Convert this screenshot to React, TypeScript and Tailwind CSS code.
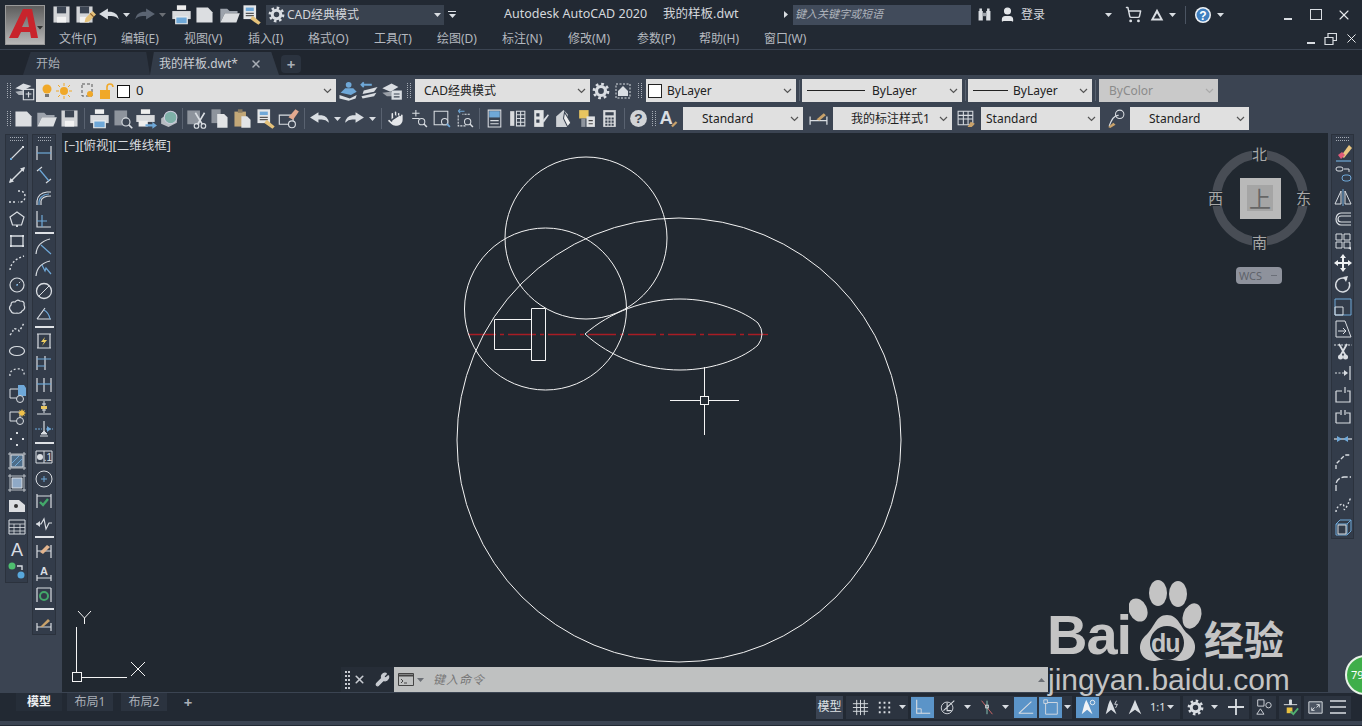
import type { ReactNode } from "react";
import { Wrench, X, User, ShoppingCart, Hand } from "lucide-react";

const L = "#d9dde2";
const B = "#6fa8d8";
const DOT = "2 2";

const line = (d: string, c = L, w = 1.2, dash?: string) => (
  <path d={d} fill="none" stroke={c} strokeWidth={w} strokeDasharray={dash} />
);
const floppy = (
  <>
    <path d="M3 3h14v14H3z" fill="#d2d4d7" />
    <path d="M6 3h8v6H6z" fill="#3b4452" />
    <path d="M6 12h8v5H6z" fill="#f2f2f2" />
  </>
);
const pencil = (
  <>
    <path d="M10 17l1-4 6-6 3 3-6 6z" fill="#e5c27a" />
    <path d="M15 9l3 3" stroke="#8a5a2a" strokeWidth={1} />
  </>
);
const dimSides = line("M3 4v13M17 4v13M3 10h14");

const icons: Record<string, ReactNode> = {
  save: floppy,
  saveas: (
    <>
      {floppy}
      {pencil}
    </>
  ),
  gear: (
    <>
      <circle cx="10" cy="10" r="7.800" fill="none" stroke={L} strokeWidth={3} strokeDasharray="3 3.120" />
      <circle cx="10" cy="10" r="5" fill="none" stroke={L} strokeWidth={3.600} />
    </>
  ),
  undo: <path d="M1 9l8-5v3h3q6 1 7 7q-3-3-7-3H9v3z" fill={L} />,
  redo: <path d="M19 9l-8-5v3H8q-6 1-7 7q3-3 7-3h3v3z" fill={L} />,
  redoOff: <path d="M19 9l-8-5v3H8q-6 1-7 7q3-3 7-3h3v3z" fill="#5b6472" />,
  print: (
    <>
      <path d="M6 2h8v4H6z" fill="#eee" />
      <path d="M2 7h16v7H2z" fill="#d8dadd" />
      <path d="M5 12h10v6H5z" fill={B} stroke="#eee" />
    </>
  ),
  newf: <path d="M3 4h10l4 4v9H3z" fill="#dcdee1" />,
  open: (
    <>
      <path d="M2 5h6l2 2h7v2H6l-4 8z" fill="#9da3ac" />
      <path d="M6 9h13l-3 8H2z" fill="#dcdee1" />
    </>
  ),
  cadstd: (
    <>
      <path d="M3 2h11v12H3z" fill="#e4e6e8" />
      <path d="M5 4h7v3H5z" fill={B} />
      <path d="M5 9h7M5 11h7" stroke="#555" />
      <path d="M9 14l2-3 7 6-2 2z" fill="#e5c27a" />
    </>
  ),
  layerprops: (
    <>
      <path d="M2 8l7-4 7 2-7 4z" fill="#d9dde2" />
      <path d="M2 11l7-1 2 1v3H5z" fill="#aeb3ba" />
      <path d="M9 9h9v9H9z" fill="#3b4452" stroke={L} />
      <path d="M11 13h5M13.500 11v5" stroke={L} />
    </>
  ),
  layers1: (
    <>
      <circle cx="11" cy="5" r="2.500" fill={B} />
      <path d="M8 8h7l3 3-5 3-9-2z" fill={B} />
      <path d="M3 14l9 3 6-3-1 3-6 2-8-2z" fill={L} />
    </>
  ),
  layers2: (
    <>
      <path d="M3 5h9M5 3L3 5l2 2" stroke={B} strokeWidth={1.6} fill="none" />
      <path d="M5 10l12-3-3 4-10 2z" fill={L} />
      <path d="M3 15l13-3-2 3-10 2z" fill={L} />
    </>
  ),
  layers3: (
    <>
      <path d="M2 8l8-4 6 3-7 4z" fill={L} />
      <path d="M2 12l7-1 3 1v3H6z" fill="#9aa0a8" />
      <path d="M10 10h9v8h-9z" fill="#d9dde2" />
      <path d="M12 13h5M12 15.500h5" stroke="#3b4452" />
    </>
  ),
  gear2: (
    <>
      <path d="M3 3h14v14H3z" fill="none" stroke={L} strokeDasharray="2 1.500" />
      <path d="M5 10l5-5 5 5v5H5z" fill={L} />
    </>
  ),
  preview: (
    <>
      <path d="M3 3h11v13H3z" fill="#8e949d" />
      <circle cx="13" cy="13" r="3.500" fill="#3b4452" stroke={L} />
      <path d="M15.500 15.500l3 3" stroke={L} strokeWidth={1.4} />
    </>
  ),
  publish: (
    <>
      <path d="M6 2h8v4H6z" fill="#eee" />
      <path d="M2 7h16v6H2z" fill="#d8dadd" />
      <path d="M4 12h8v5H4z" fill="#eee" />
      <path d="M10 15h6v-2l4 3-4 3v-2h-6z" fill={B} />
    </>
  ),
  plot3d: (
    <>
      <path d="M3 10l8-6 7 3v7l-8 4-7-3z" fill="#b8bcc2" />
      <circle cx="12" cy="9" r="6" fill="#7eb0a8" stroke="#ccd" />
    </>
  ),
  cut: (
    <>
      <path d="M2 3h11v12H2z" fill="#8e949d" />
      <path d="M9 5l6 10M17 5l-6 10" stroke={L} strokeWidth={1.4} />
      <circle cx="10" cy="16.500" r="2" fill="none" stroke={L} />
      <circle cx="16" cy="16.500" r="2" fill="none" stroke={L} />
    </>
  ),
  copy: (
    <>
      <path d="M3 2h8v12H3z" fill="#8e949d" />
      <path d="M8 6h6l3 3v9H8z" fill="#e2e4e6" />
    </>
  ),
  paste: (
    <>
      <path d="M3 4h10v13H3z" fill="#c3a878" />
      <path d="M6 2h4v3H6z" fill="#8a7b60" />
      <path d="M9 8h5l3 3v7H9z" fill="#e2e4e6" />
    </>
  ),
  match: (
    <>
      <path d="M2 7h12v8H2z" fill="none" stroke={L} />
      <circle cx="13" cy="15" r="3" fill="#3b4452" stroke={L} />
      <path d="M10 9l6-7 3 2-5 7z" fill="#e3a98f" />
    </>
  ),
  zoomrt: (
    <>
      <path d="M4 5h7M7.500 2v6M4 10h7" stroke={L} />
      <circle cx="13" cy="13" r="3" fill="none" stroke={L} />
      <path d="M15 15l3 3" stroke={L} strokeWidth={1.4} />
    </>
  ),
  zoomwin: (
    <>
      <path d="M3 3h13v13H3z" fill="none" stroke={L} />
      <circle cx="13" cy="13" r="3" fill="#3b4452" stroke={L} />
      <path d="M15 15l3 3" stroke={B} strokeWidth={1.6} />
    </>
  ),
  zoomprev: (
    <>
      <path d="M4 3h6M4 3l2-2M4 3l2 2" stroke={B} fill="none" />
      <path d="M4 7v10h8M15 6H8" stroke={L} fill="none" strokeDasharray="2 1" />
      <circle cx="13" cy="13" r="3" fill="none" stroke={L} />
      <path d="M15 15l3 3" stroke={L} strokeWidth={1.4} />
    </>
  ),
  props: (
    <>
      <path d="M4 2h12v16H4z" fill="none" stroke={L} />
      <path d="M5 3h10v6H5z" fill={B} />
      <path d="M6 12h8M6 15h8" stroke={L} />
    </>
  ),
  dc: (
    <>
      <path d="M3 3h4v14H3z" fill="#d8dadd" />
      <path d="M9 3h8v14H9z" fill="none" stroke={L} />
      <path d="M9 6.500h8M9 10h8M9 13.500h8M13 3v14" stroke={L} />
    </>
  ),
  tools: (
    <>
      <path d="M4 2h9v16H4z" fill="#e0e2e4" />
      <path d="M6 5h3v3H6zM6 11h3v3H6z" fill="#3b4452" />
      <path d="M12 12l5-6 1 1-5 7z" fill={L} />
    </>
  ),
  sheet: (
    <>
      <path d="M3 8l7-6 4 4v12H3z" fill="#cfd2d6" />
      <path d="M11 4l6 10-3 4-4-8z" fill="#eee" stroke="#3b4452" />
    </>
  ),
  markup: (
    <>
      <path d="M3 2h9v8H3z" fill="#e8c560" />
      <path d="M10 8h8v10h-8z" fill="#e0e2e4" />
      <path d="M12 12h4M12 15h4" stroke="#444" />
      <path d="M5 10h4v8H5z" fill="#8e949d" />
    </>
  ),
  calc: (
    <>
      <path d="M4 2h12v16H4z" fill="#d8dadd" />
      <path d="M6 4h8v3H6z" fill="#3b4452" />
      <path d="M6 9h2v2H6zM9 9h2v2H9zM12 9h2v2h-2zM6 12h2v2H6zM9 12h2v2H9zM12 12h2v2h-2zM6 15h2v2H6zM9 15h2v2H9zM12 15h2v2h-2z" fill="#3b4452" />
    </>
  ),
  help: (
    <>
      <circle cx="10" cy="10" r="8" fill="#d2d4d7" />
      <text x="10" y="14.500" textAnchor="middle" fontSize="13" fontWeight="700" fill="#3b4452" fontFamily="Liberation Sans">?</text>
    </>
  ),
  helpB: (
    <>
      <circle cx="10" cy="10" r="8" fill="#f0f2f5" />
      <circle cx="10" cy="10" r="6.500" fill="#3f7fc0" />
      <text x="10" y="14.500" textAnchor="middle" fontSize="12" fontWeight="700" fill="#fff" fontFamily="Liberation Sans">?</text>
    </>
  ),
  textA: (
    <>
      <text x="8" y="15" textAnchor="middle" fontSize="16" fontWeight="700" fill={L} fontFamily="Liberation Sans">A</text>
      <path d="M13 17l4-4" stroke="#c9a26a" strokeWidth={2} />
    </>
  ),
  dimstyle: (
    <>
      {line("M2 8v8M18 8v8M2 12h16")}
      <path d="M8 11l7-6 2 2-6 5z" fill="#c9a26a" />
    </>
  ),
  tablestyle: (
    <>
      <path d="M2 3h14v13H2z" fill="none" stroke={L} />
      <path d="M2 7h14M2 10.500h14M7 3v13M11.500 3v13" stroke={L} />
      <path d="M11 18l3-5 4 2-3 3z" fill="#c9a26a" />
    </>
  ),
  mleader: (
    <>
      {line("M4 17Q8 6 13 7", L)}
      <circle cx="14" cy="6" r="4" fill="none" stroke={L} />
      <path d="M3 18l5-4 2 2-5 3z" fill="#c9a26a" />
    </>
  ),
  binoc: (
    <>
      <path d="M3 6h5v11H3zM12 6h5v11h-5z" fill={L} />
      <path d="M8 8h4v4H8z" fill="#9aa0a8" />
      <path d="M4 3h3v3H4zM13 3h3v3h-3z" fill={L} />
    </>
  ),
  triangle: <path d="M10 3L3 16h14zM10 8l3.500 6h-7z" fill={L} fillRule="evenodd" />,
  // left bar: draw
  ln: (
    <>
      {line("M4 16L16 4", L, 1.1)}
      <rect x="3" y="15" width="2" height="2" fill={B} />
      <rect x="15" y="3" width="2" height="2" fill={L} />
    </>
  ),
  xln: (
    <>
      <path d="M3 17l7-7 7-7" stroke={L} strokeWidth={1.4} />
      <path d="M2 18l1.500-5 3.500 3.500zM18 2l-1.500 5L13 3.500z" fill={L} />
    </>
  ),
  pl: line("M2 15h8M11 4h3q4 1 4 5.500T14 15h-3", L, 1.4, DOT),
  pg: (
    <>
      <path d="M10 3l7 5-2.500 8h-9L3 8z" fill="none" stroke={L} strokeWidth={1.2} />
      <rect x="9" y="16" width="2" height="2" fill={L} />
    </>
  ),
  rc: (
    <>
      <path d="M4 5h12v10H4z" fill="none" stroke={L} strokeWidth={1.3} />
      <path d="M3 4h2v2H3zM15 4h2v2h-2zM3 14h2v2H3zM15 14h2v2h-2z" fill={L} />
    </>
  ),
  ar: line("M3 17Q4 7 17 3", L, 1.4, DOT),
  ci: (
    <>
      <circle cx="10" cy="10" r="7" fill="none" stroke={L} strokeWidth={1.2} />
      <path d="M10 10l4-4" stroke={L} strokeDasharray="1.500 1.500" />
      <rect x="9.200" y="9.200" width="1.600" height="1.600" fill={B} />
    </>
  ),
  cl: <path d="M4 8q0-4 4-3 2-3 5-1 5 0 4 4 2 4-2 6-1 3-5 2-5 1-6-2-3-3 0-6z" fill="none" stroke={L} strokeWidth={1.2} />,
  sp: line("M3 16q3-3 3-5t3-1 3 2 5-8", L, 1.4, DOT),
  el: <ellipse cx="10" cy="10" rx="7.500" ry="4.500" fill="none" stroke={L} strokeWidth={1.2} />,
  ea: line("M3 13Q2 7 10 6T17 13", L, 1.3, DOT),
  ins: (
    <>
      <path d="M3 4h10v9H3z" fill="none" stroke={L} />
      <path d="M11 0h6l2 3v8h-8z" fill={B} />
      <circle cx="13" cy="14" r="3.500" fill="#3b4452" stroke={L} />
    </>
  ),
  blk: (
    <>
      <path d="M3 5h10v9H3z" fill="none" stroke={L} />
      <circle cx="13" cy="14" r="3.500" fill="#3b4452" stroke={L} />
      <path d="M15 2l1 2 2-1-1 2 2 1-2 1 1 2-2-1-1 2-1-2-2 1 1-2-2-1 2-1-1-2 2 1z" fill="#f0c14b" />
    </>
  ),
  pt: <path d="M9 3h2v2H9zM3 9h2v2H3zM15 9h2v2h-2zM9 15h2v2H9z" fill={L} />,
  ha: (
    <>
      <path d="M4 4h12v12H4z" fill={B} fillOpacity={0.45} stroke={L} />
      <path d="M5 12l7-7M8 15l7-7" stroke={B} />
      <path d="M3 1v18M17 1v18M1 3h18M1 17h18" stroke={L} strokeWidth={0.8} />
    </>
  ),
  gr: (
    <>
      <path d="M5 5h10v10H5z" fill="#8fa9c6" stroke={L} />
      <path d="M3 1v18M17 1v18M1 3h18M1 17h18" stroke={L} strokeWidth={0.8} />
    </>
  ),
  rg: (
    <>
      <path d="M2 5h10l6 5v7H2z" fill="#dcdee1" />
      <circle cx="9" cy="11" r="2" fill="#333" />
    </>
  ),
  tb: (
    <>
      <path d="M2 3h16v14H2z" fill="none" stroke={L} />
      <path d="M2 7h16M2 10.500h16M2 14h16M7 7v10M13 7v10" stroke={L} strokeWidth={0.8} />
    </>
  ),
  mt: <text x="10" y="17" textAnchor="middle" fontSize="18" fill={L} fontFamily="Liberation Sans">A</text>,
  add: (
    <>
      <circle cx="5" cy="5" r="3.500" fill="#4fc070" />
      <path d="M10 5h5v4" stroke={L} fill="none" strokeWidth={1.4} />
      <circle cx="14" cy="14" r="3.500" fill="#58a8dc" />
    </>
  ),
  // dim bar
  dl: (
    <>
      {line("M3 3v14M17 3v14", L)}
      {line("M3 10h14", B)}
    </>
  ),
  da: (
    <>
      {line("M3 6l5-4M12 18l5-4", L)}
      {line("M5 4l10 12", B)}
    </>
  ),
  dar: (
    <>
      {line("M3 18V14Q4 6 13 5h4M7 18v-4q1-5 10-5", L)}
      {line("M5 18Q4 8 15 7", B)}
    </>
  ),
  dor: (
    <>
      {line("M3 2v16h14", L)}
      {line("M8 6v12M3 12h10", B)}
    </>
  ),
  dr: (
    <>
      {line("M2 17Q3 5 16 2", L)}
      {line("M7 8l10 9", B)}
    </>
  ),
  dj: (
    <>
      {line("M2 17Q3 5 16 2", L)}
      {line("M8 6l3 6 1-3 5 6", B)}
    </>
  ),
  dd: (
    <>
      <circle cx="10" cy="10" r="7.500" fill="none" stroke={L} strokeWidth={1.3} />
      <path d="M5 15L15 5" stroke={L} />
    </>
  ),
  dan: (
    <>
      {line("M3 16L11 5M3 16h14", L)}
      {line("M10 7q5 3 6 9", B)}
    </>
  ),
  dq: (
    <>
      {line("M3 3h14M3 17h14M4 3v14M16 3v14", L)}
      <path d="M11 6l-4 5h3l-2 4 5-6h-3z" fill="#f0d060" />
    </>
  ),
  db: (
    <>
      {line("M3 3v14M11 3v14", L)}
      {line("M3 6h14M3 13h8", B)}
    </>
  ),
  dc2: (
    <>
      {line("M3 3v14M10 3v14M17 3v14", L)}
      {line("M3 9h14", B)}
    </>
  ),
  dsp: (
    <>
      {line("M3 3h14M3 17h14", L)}
      <path d="M10 4v12M8 7h4M8 13h4" stroke={L} />
      <path d="M7 9h6v3H7z" fill="#e8c560" />
    </>
  ),
  dbk: (
    <>
      {line("M1 10h7M12 10h7", B, 1.2, "2 1")}
      {line("M10 2v10", L)}
      <path d="M7 15h6l-3 -3zM6 17h8" fill={L} stroke={L} />
      <path d="M13 7l4 3-4 3z" fill={B} />
    </>
  ),
  dt: (
    <>
      <path d="M2 4h16v12H2zM10 4v12" fill="none" stroke={L} />
      <circle cx="6" cy="10" r="3" fill={L} />
      <text x="14" y="14" textAnchor="middle" fontSize="10" fill={L} fontFamily="Liberation Sans">.1</text>
    </>
  ),
  dce: (
    <>
      <circle cx="10" cy="10" r="8" fill="none" stroke={L} />
      <path d="M7 10h6M10 7v6" stroke={B} />
    </>
  ),
  dchk: (
    <>
      {line("M3 3v14M17 3v14M3 5h14")}
      <path d="M6 11l3 3 5-6" stroke="#43a86a" strokeWidth={2.400} fill="none" />
    </>
  ),
  dji: (
    <>
      {line("M2 11h5l3-5 2 10 3-6h3", L)}
      <path d="M2 11l4-3v6z" fill={L} />
    </>
  ),
  ded: (
    <>
      {dimSides}
      <path d="M6 11l7-7 3 2-7 7z" fill="#e2b48e" />
    </>
  ),
  dte: (
    <>
      {line("M3 12v6M17 12v6M3 15h14")}
      <text x="10" y="12" textAnchor="middle" fontSize="11" fontWeight="700" fill={L} fontFamily="Liberation Sans">A</text>
    </>
  ),
  dup: (
    <>
      {line("M3 3v14M17 3v14M3 3h14")}
      <circle cx="10" cy="11" r="4" fill="none" stroke="#43a86a" strokeWidth={2} />
    </>
  ),
  dst: (
    <>
      {line("M3 10v8M17 10v8M3 14h14")}
      <path d="M6 14l8-8 2 2-7 6z" fill="#c9a26a" />
    </>
  ),
  // modify bar
  er: (
    <>
      <path d="M8 13l8-11 3 3-8 10z" fill="#e8c580" />
      <path d="M5 12l4-3 3 3-4 4z" fill="#e05a78" />
      {line("M3 18h15", B)}
    </>
  ),
  cp: (
    <>
      <rect x="3" y="2" width="7" height="4" rx="2" fill="none" stroke={L} />
      <path d="M11 4h5v3" fill="none" stroke={L} />
      <rect x="9" y="10" width="9" height="6" rx="3" fill="none" stroke={B} />
    </>
  ),
  mi: (
    <>
      <path d="M8 4v13H2zM12 4v13h6z" fill="none" stroke={L} />
      <path d="M10 2v17" stroke={B} />
    </>
  ),
  of: line("M18 4H8a5 6 0 000 12h10M18 7H8a3 3 0 000 6h10", L, 1.2),
  arr: (
    <>
      <path d="M3 3h6v6H3zM11 3h6v6h-6zM3 11h6v6H3zM11 11h6v6h-6z" fill="none" stroke={L} />
      <path d="M15 17l3-1v3z" fill={L} />
    </>
  ),
  mv: <path d="M10 1l3 4h-2v4h4V7l4 3-4 3v-2h-4v4h2l-3 4-3-4h2v-4H5v2l-4-3 4-3v2h4V5H7z" fill="#eef0f2" />,
  ro: (
    <>
      <path d="M14 4.500A7 7 0 1016 7" fill="none" stroke={L} strokeWidth={1.4} />
      <path d="M10 2l5-1-2 6z" fill={L} />
    </>
  ),
  sc: (
    <>
      <path d="M2 2h16v16H2z" fill="none" stroke={B} />
      <path d="M2 10h8v8H2z" fill="none" stroke={L} />
    </>
  ),
  st: (
    <>
      <path d="M3 2h9l6 16H3z" fill="none" stroke={L} />
      <path d="M5 12h8M10 9l3 3-3 3" fill="none" stroke={L} />
    </>
  ),
  tr: (
    <>
      {line("M1 4h18", L, 1.2, "2 1.500")}
      <path d="M6 3l8 14M14 3L6 17" stroke={L} strokeWidth={1.8} />
      <circle cx="7.500" cy="16" r="2.500" fill={L} />
      <circle cx="12.500" cy="16" r="2.500" fill={L} />
    </>
  ),
  ex: (
    <>
      {line("M2 10h9", L, 1.2, "2 1.500")}
      {line("M17 3v14")}
      <path d="M11 7l4 3-4 3z" fill={L} />
    </>
  ),
  bp: (
    <>
      <path d="M3 6h6M14 6h3v11H3V6" fill="none" stroke={L} strokeWidth={1.2} />
      {line("M12 2v6")}
    </>
  ),
  bk: line("M3 16V6h4M13 6h4v10H3M8 3v5M12 3v5", L, 1.2),
  jo: (
    <>
      {line("M1 10h18")}
      <path d="M4 7l5 3-5 3zM15 7l-5 3 5 3z" fill={B} />
    </>
  ),
  ch: line("M3 18V13L12 4h6", L, 1.3, "4 2"),
  fi: line("M3 18V11Q4 5 11 4h7", L, 1.3, "6 2"),
  bl: line("M3 17q0-4 4-7t4 3 7-11", L, 1.4, DOT),
  exp: (
    <>
      <path d="M3 7h11v11H3zM3 7l4-4h11v11l-4 4M14 7l4-4" fill="none" stroke={B} />
      <path d="M5 8h8v9H5z" fill="none" stroke={L} />
    </>
  ),
  // status bar
  grid: <path d="M6 2v16M10 2v16M14 2v16M2 6h16M2 10h16M2 14h16" stroke={L} />,
  snap: <path d="M4 4h2v2H4zM9 4h2v2H9zM14 4h2v2h-2zM4 9h2v2H4zM9 9h2v2H9zM14 9h2v2h-2zM4 14h2v2H4zM9 14h2v2H9zM14 14h2v2h-2z" fill={L} />,
  ortho: (
    <>
      {line("M3 2v15h15", L)}
      <path d="M3 12h5v5" fill="none" stroke={L} />
    </>
  ),
  polar: (
    <>
      <circle cx="9" cy="11" r="6.500" fill="none" stroke={L} />
      {line("M5 14L17 3M9 5v9h5", L)}
    </>
  ),
  isoline: (
    <>
      <path d="M4 3l12 15" stroke="#d86a6a" />
      <path d="M10 3v15" stroke="#8ed0c0" />
      <rect x="8.500" y="8" width="3" height="3" fill="none" stroke={L} />
    </>
  ),
  angle: line("M2 17L16 4M2 17h16", L),
  osnap: (
    <>
      <path d="M4 5h13v13H4z" fill="none" stroke={L} />
      <path d="M2 2h4v4H2z" fill="#5b94c8" stroke={L} />
    </>
  ),
  anno1: (
    <>
      <path d="M8 2l2.500 5L15 18l-6-5-6 5L6 7z" fill="#f0f2f5" />
      <circle cx="15" cy="5" r="2.500" fill="none" stroke="#f0f2f5" />
    </>
  ),
  anno2: (
    <>
      <path d="M8 2l2.500 5L15 18l-6-5-6 5L6 7z" fill={L} />
      <path d="M15 3l-2 4h3l-2 4" stroke={L} fill="none" />
    </>
  ),
  anno3: <path d="M10 2l2.500 6L17 18l-7-5-7 5 4.500-10z" fill={L} />,
  plus: <path d="M10 2v16M2 10h16" stroke={L} strokeWidth={1.8} />,
  iso: (
    <>
      <path d="M3 2h7v7H3z" fill="none" stroke={L} />
      <circle cx="15" cy="8" r="3" fill="none" stroke={L} />
      <path d="M6 12l4 6H2z" fill="none" stroke={L} />
    </>
  ),
  cleanscreen: (
    <>
      <path d="M3 4h14v12H3z" fill="#4b5462" stroke={L} />
      <path d="M6 13l3-3M6 13v-3M6 13h3M14 7l-3 3M14 7v3M14 7h-3" stroke={L} />
    </>
  ),
  menu: <path d="M2 4h16M2 10h16M2 16h16" stroke={L} strokeWidth={1.6} />,
  workspace: (
    <>
      <path d="M9 2h2v5h-2zM3 7h14" stroke={L} fill={L} />
      <path d="M6 10h6v6H6z" fill="#e8c040" />
      <path d="M10 14l3 3 5-6" stroke="#50b070" strokeWidth={2} fill="none" />
    </>
  ),
};

const Ic = ({ n, className = "w-[23px]", size = 23 }: { n: string; className?: string; size?: number }) => (
  <div className={`flex shrink-0 items-center justify-center ${className}`}>
    <svg width={size} height={size} viewBox="0 0 20 20" className="shrink-0">
      {icons[n]}
    </svg>
  </div>
);

const Tri = ({ className = "w-[12px]", up = false, dim = false }: { className?: string; up?: boolean; dim?: boolean }) => (
  <div className={`flex shrink-0 items-center justify-center ${className}`}>
    <svg width="7" height="4" viewBox="0 0 7 4">
      <path d={up ? "M0 4h7L3.500 0z" : "M0 0h7L3.500 4z"} fill={dim ? "#6b6f75" : L} />
    </svg>
  </div>
);

const GripV = ({ className = "" }: { className?: string }) => (
  <div className={`h-[15px] w-[4px] shrink-0 border-x border-dotted border-[#a5abb4] ${className}`} />
);

const Sep = ({ className }: { className: string }) => (
  <div className={`flex shrink-0 justify-center self-stretch py-[2px] ${className}`}>
    <div className="w-px bg-[#596270]" />
  </div>
);

const Chevron = ({ color = "#555" }: { color?: string }) => (
  <svg width="9" height="6" viewBox="0 0 9 6" className="shrink-0">
    <path d="M1 1l3.500 3.500L8 1" fill="none" stroke={color} strokeWidth={1.2} />
  </svg>
);

const Combo = ({ className, children, off = false }: { className: string; children?: ReactNode; off?: boolean }) => (
  <div
    className={`flex h-[23px] shrink-0 items-center pr-[4px] text-[12px] ${off ? "bg-[#c9c9c9] text-[#8b8b8b]" : "bg-[#e0e0e0] text-[#222]"} ${className}`}
  >
    <div className="flex min-w-0 flex-1 items-center whitespace-nowrap">{children}</div>
    <Chevron color={off ? "#aaa" : "#555"} />
  </div>
);

const menus: [string, string][] = [
  ["文件(F)", "w-[62px]"],
  ["编辑(E)", "w-[63px]"],
  ["视图(V)", "w-[64px]"],
  ["插入(I)", "w-[60px]"],
  ["格式(O)", "w-[66px]"],
  ["工具(T)", "w-[63px]"],
  ["绘图(D)", "w-[65px]"],
  ["标注(N)", "w-[66px]"],
  ["修改(M)", "w-[69px]"],
  ["参数(P)", "w-[62px]"],
  ["帮助(H)", "w-[65px]"],
  ["窗口(W)", "w-[65px]"],
];

const Logo = () => (
  <div className="ml-[5px] mt-[5px] flex h-[40px] w-[40px] shrink-0 items-center justify-center border border-[#9a9a9a] bg-gradient-to-b from-[#5e5e5e] to-[#b8b8b8]">
    <svg width="38" height="38" viewBox="0 0 38 38">
      <path d="M3 32L17 3h9l6 29h-7l-1-6h-9l-3 6zM16 21h7l-2-11z" fill="#c8242c" fillRule="evenodd" />
      <path d="M31 20h6l-3 3.500z" fill="#333" />
    </svg>
  </div>
);

const TitleBar = () => (
  <div className="flex h-[49px] shrink-0">
    <Logo />
    <div className="flex min-w-0 flex-1 flex-col pl-[5px]">
      <div className="flex h-[29px] shrink-0 items-center">
        <Ic n="save" className="w-[22px]" />
        <Ic n="saveas" className="ml-px w-[22px]" />
        <Ic n="undo" className="ml-[3px] w-[22px]" size={22} />
        <Tri />
        <Ic n="redoOff" className="ml-[2px] w-[22px]" size={22} />
        <Tri dim />
        <Ic n="print" className="ml-[2px] w-[22px]" />
        <Ic n="newf" className="ml-px w-[22px]" />
        <Ic n="open" className="ml-[3px] w-[22px]" />
        <Ic n="cadstd" className="w-[22px]" />
        <div className="ml-[4px] flex h-[20px] w-[178px] shrink-0 items-center bg-[#39424f] pl-[2px] pr-[2px]">
          <Ic n="gear" className="w-[17px]" size={17} />
          <span className="ml-[2px] flex-1 text-[12px] text-[#d4d7dc]">CAD经典模式</span>
          <Tri className="w-[10px]" />
        </div>
        <div className="flex w-[16px] shrink-0 flex-col items-center gap-[2px]">
          <div className="h-px w-[8px] bg-[#d9dde2]" />
          <Tri className="w-[10px]" />
        </div>
        <div className="ml-[44px] flex w-[275px] shrink-0 text-[12.5px] text-[#d4d7dc]">
          <span>Autodesk AutoCAD 2020</span>
          <span className="ml-[16px]">我的样板.dwt</span>
        </div>
        <div className="flex w-[14px] shrink-0 justify-center">
          <svg width="4" height="7" viewBox="0 0 4 7">
            <path d="M0 0l4 3.500L0 7z" fill={L} />
          </svg>
        </div>
        <div className="flex h-[20px] w-[178px] shrink-0 items-center bg-[#414b5b] pl-[2px] text-[11px] italic text-[#aeb3bb]">
          键入关键字或短语
        </div>
        <Ic n="binoc" className="ml-[3px] w-[20px]" size={17} />
        <div className="ml-[3px] flex w-[20px] shrink-0 justify-center">
          <User size={17} fill="#e4e6e9" stroke="#e4e6e9" />
        </div>
        <span className="ml-[4px] w-[24px] shrink-0 text-[12px] text-[#d4d7dc]">登录</span>
        <Tri className="ml-[58px] w-[10px]" />
        <div className="ml-[10px] flex w-[20px] shrink-0 justify-center">
          <ShoppingCart size={17} stroke="#d9dde2" />
        </div>
        <Ic n="triangle" className="ml-[4px] w-[20px]" size={18} />
        <Tri className="w-[10px]" />
        <div className="ml-[8px] mr-[7px] h-[18px] w-px bg-[#4b5462]" />
        <Ic n="helpB" className="w-[20px]" size={20} />
        <Tri className="ml-[2px] w-[10px]" />
        <div className="ml-auto flex items-center pr-[10px]">
          <div className="mr-[18px] mt-[8px] h-[2px] w-[8px] bg-[#d9dde2]" />
          <div className="mr-[14px] h-[11px] w-[12px] border-[1.5px] border-[#d9dde2]" />
          <X size={16} stroke="#e8eaed" strokeWidth={1.6} />
        </div>
      </div>
      <div className="flex h-[19px] shrink-0 items-center pl-[9px] text-[12px] text-[#b4b8bf]">
        {menus.map(([label, w]) => (
          <span key={label} className={`shrink-0 ${w}`}>
            {label}
          </span>
        ))}
        <div className="ml-auto flex items-center pr-[3px]">
          <div className="mr-[9px] mt-[9px] h-[2px] w-[8px] bg-[#d9dde2]" />
          <svg width="13" height="12" viewBox="0 0 13 12" className="mr-[7px]">
            <path d="M1 4.500h8v7H1zM4 4.500v-4h8.500v7H9" fill="none" stroke={L} strokeWidth={1.2} />
          </svg>
          <X size={15} stroke="#e8eaed" strokeWidth={1.6} />
        </div>
      </div>
    </div>
  </div>
);

const Tabs = () => (
  <div className="flex h-[26px] shrink-0 items-end border-t border-[#3b4452] bg-[#20262f] pl-[23px] pr-[4px]">
    <div className="flex h-[23px] w-[127px] items-center bg-[#2b333f] pl-[13px] text-[12px] text-[#a9aeb6] [clip-path:polygon(6%_0,97%_0,100%_100%,0_100%)]">
      开始
    </div>
    <div className="flex h-[23px] w-[129px] items-center bg-[#333c49] pl-[9px] text-[12px] text-[#c9ccd2] [clip-path:polygon(3%_0,94%_0,100%_100%,0_100%)]">
      我的样板.dwt*
      <X size={12} stroke="#a9aeb6" strokeWidth={3} className="ml-[12px]" />
    </div>
    <div className="mb-[2px] ml-[2px] flex h-[18px] w-[20px] items-center justify-center rounded-[4px] bg-[#2b333f] text-[15px] font-bold leading-none text-[#a9aeb6]">
      +
    </div>
  </div>
);

const Toolbars = () => (
  <div className="flex h-[58px] shrink-0 flex-col bg-[#3b4452] pt-[3px]">
    <div className="flex h-[25px] items-center pl-[7px]">
      <GripV className="mr-px" />
      <Ic n="layerprops" className="w-[24px]" />
      <Combo className="w-[300px] pl-[2px]">
        <svg width="96" height="18" viewBox="0 0 96 18" className="shrink-0">
          <circle cx="9" cy="7" r="4.500" fill="#f0a828" />
          <path d="M7 12h4v3H7z" fill="#777" />
          <circle cx="26" cy="9" r="4" fill="#f0a828" />
          <path d="M26 1v3M26 14v3M18 9h3M31 9h3M20 3l2 2M32 3l-2 2M20 15l2-2M32 15l-2-2" stroke="#f0a828" />
          <path d="M44 2h10v12H44z" fill="none" stroke="#555" strokeDasharray="3 2" />
          <circle cx="52" cy="12" r="3" fill="#f0a828" />
          <path d="M62 8h10v9H62z" fill="#f0a828" />
          <path d="M69 8V5q0-3 3-3t3 3" fill="none" stroke="#f0a828" strokeWidth={1.6} />
          <rect x="79.500" y="3.500" width="12" height="12" fill="#fff" stroke="#111" />
        </svg>
        <span className="ml-[2px] text-[13px]">0</span>
      </Combo>
      <Ic n="layers1" className="w-[22px]" />
      <Ic n="layers2" className="w-[22px]" />
      <Ic n="layers3" className="w-[22px]" />
      <div className="flex w-[13px] shrink-0 justify-center">
        <GripV />
      </div>
      <Combo className="w-[175px] pl-[9px]">CAD经典模式</Combo>
      <Ic n="gear" className="w-[22px]" size={18} />
      <Ic n="gear2" className="w-[22px]" size={20} />
      <div className="flex w-[12px] shrink-0 justify-center">
        <GripV />
      </div>
      <Combo className="w-[150px] pl-[2px]">
        <div className="mr-[5px] h-[14px] w-[14px] border border-[#222] bg-white" />
        ByLayer
      </Combo>
      <Sep className="w-[6px]" />
      <Combo className="w-[160px] pl-[5px]">
        <div className="h-px w-[58px] bg-[#222]" />
        <span className="ml-[7px]">ByLayer</span>
      </Combo>
      <Sep className="w-[6px]" />
      <Combo className="w-[124px] pl-[5px]">
        <div className="h-px w-[35px] bg-[#222]" />
        <span className="ml-[5px]">ByLayer</span>
      </Combo>
      <Sep className="w-[7px]" />
      <Combo className="w-[119px] pl-[10px]" off>
        ByColor
      </Combo>
    </div>
    <div className="mt-[3px] flex h-[25px] items-center pl-[7px]">
      <GripV className="mr-px" />
      <Ic n="newf" />
      <Ic n="open" />
      <Ic n="save" />
      <Sep className="w-[7px]" />
      <Ic n="print" />
      <Ic n="preview" />
      <Ic n="publish" />
      <Ic n="plot3d" size={21} />
      <Sep className="w-[5px]" />
      <Ic n="cut" />
      <Ic n="copy" />
      <Ic n="paste" />
      <Ic n="cadstd" />
      <Ic n="match" />
      <Sep className="w-[8px]" />
      <Ic n="undo" size={21} />
      <Tri />
      <Ic n="redo" size={21} />
      <Tri />
      <Sep className="w-[6px]" />
      <div className="flex w-[23px] shrink-0 justify-center">
        <Hand size={19} fill="#e4e6e9" stroke="#3b4452" />
      </div>
      <Ic n="zoomrt" size={21} />
      <Ic n="zoomwin" size={21} />
      <Ic n="zoomprev" size={21} />
      <Sep className="w-[7px]" />
      <Ic n="props" size={21} />
      <Ic n="dc" size={21} />
      <Ic n="tools" size={21} />
      <Ic n="sheet" size={21} />
      <Ic n="markup" size={21} />
      <Ic n="calc" size={21} />
      <Sep className="w-[6px]" />
      <Ic n="help" size={21} />
      <div className="flex w-[7px] shrink-0 justify-center">
        <GripV />
      </div>
      <Ic n="textA" />
      <Combo className="ml-[3px] w-[120px] pl-[19px]">Standard</Combo>
      <Ic n="dimstyle" className="w-[30px]" size={21} />
      <Combo className="w-[119px] pl-[18px]">我的标注样式1</Combo>
      <Ic n="tablestyle" className="w-[29px]" size={21} />
      <Combo className="w-[119px] pl-[5px]">Standard</Combo>
      <Ic n="mleader" className="w-[30px]" size={21} />
      <Combo className="w-[119px] pl-[19px]">Standard</Combo>
    </div>
  </div>
);

const GripH = () => <div className="mx-auto mb-px mt-[2px] h-[4px] w-[13px] shrink-0 border-y border-dotted border-[#a5abb4]" />;

const BarSep = () => <div className="mx-auto my-[2px] h-[2px] w-[19px] shrink-0 bg-[#dfe2e6]" />;

const VBar = ({ items, className }: { items: string[]; className: string }) => (
  <div className={`flex flex-col border border-[#2b323d] bg-[#333c4a] ${className}`}>
    <GripH />
    {items.map((n, i) => (n === "-" ? <BarSep key={i} /> : <Ic key={i} n={n} className="h-[22px] w-full" size={20} />))}
  </div>
);

const drawBar = ["ln", "xln", "pl", "pg", "rc", "ar", "ci", "cl", "sp", "el", "ea", "ins", "blk", "pt", "ha", "gr", "rg", "tb", "mt", "add"];
const dimBar = ["dl", "da", "dar", "dor", "-", "dr", "dj", "dd", "dan", "-", "dq", "db", "dc2", "dsp", "dbk", "-", "dt", "dce", "dchk", "dji", "-", "ded", "dte", "dup", "-", "dst"];
const modifyBar = ["er", "cp", "mi", "of", "arr", "mv", "ro", "sc", "st", "tr", "ex", "bp", "bk", "jo", "ch", "fi", "bl", "exp"];

const Drawing = () => (
  <svg className="absolute inset-0" width="1266" height="559" viewBox="62 133 1266 559">
    <path d="M468 334.500H768" stroke="#a81c24" strokeWidth="1.300" strokeDasharray="28 4 4 4" fill="none" />
    <g fill="none" stroke="#f4f4f4" strokeWidth="1">
      <circle cx="679" cy="440" r="222" />
      <circle cx="586" cy="238" r="81" />
      <circle cx="545.500" cy="309" r="81" />
      <path d="M585 334C610 312 645 299 680 299C715 299 745 312 758 323Q766 334 758 345C745 357 715 370 680 370C645 370 610 357 585 334Z" />
      <path d="M494.500 319.500H531.500V349.500H494.500Z" />
      <path d="M531.500 308.500H545.500V360.500H531.500Z" />
      <path d="M704.500 367V396M704.500 405V435M670 400.500H700M709 400.500H739" />
      <rect x="700.500" y="396.500" width="8" height="8" />
      <path d="M76.500 627V672M81 677.500H127" />
      <rect x="72.500" y="672.500" width="9" height="9" />
      <path d="M131 662L145 676M145 662L131 676" />
      <path d="M78 611L84.500 618L91 611M84.500 618V624" />
    </g>
  </svg>
);

const ViewCube = () => (
  <>
    <div className="absolute left-[1150px] top-[17px] flex h-[96px] w-[96px] items-center justify-center rounded-full border-[9px] border-[#484d55] text-[15px] leading-none text-[#a8a8a8]">
      <div className="flex h-[41px] w-[41px] shrink-0 items-center justify-center bg-[#b9b9b9]">
        <div className="flex h-[26px] w-[26px] items-center justify-center bg-[#a5a5a5] text-[22px] leading-none text-[#666]">上</div>
      </div>
      <span className="absolute left-[31px] top-[-12px] bg-[#212830]">北</span>
      <span className="absolute left-[-13px] top-[32px] bg-[#212830]">西</span>
      <span className="absolute left-[75px] top-[32px] bg-[#212830]">东</span>
      <span className="absolute left-[31px] top-[76px] bg-[#212830]">南</span>
    </div>
    <div className="absolute left-[1174px] top-[134px] flex h-[17px] w-[46px] items-center justify-between rounded-[4px] bg-[#8e929c] pl-[3px] pr-[5px] text-[11px] leading-none text-[#5f636b]">
      WCS
      <div className="h-px w-[6px] bg-[#6b6f78]" />
    </div>
  </>
);

const CommandLine = () => (
  <div className="absolute left-[279px] top-[534px] flex h-[25px] w-[707px] items-center">
    <div className="flex h-full w-[53px] shrink-0 items-center bg-[#262d37] pl-[4px]">
      <div className="h-[18px] w-[5px] border-x-2 border-dotted border-[#c8ccd2]" />
      <X size={13} stroke="#c8ccd2" strokeWidth={3} className="ml-[3px]" />
      <Wrench size={15} fill="#c8ccd2" stroke="#c8ccd2" className="ml-[9px]" />
    </div>
    <div className="flex h-full flex-1 items-center bg-[#bfc1c1] pl-[4px] pr-[3px]">
      <svg width="16" height="13" viewBox="0 0 16 13" className="shrink-0">
        <path d="M.5.500h15v12H.5z" fill="none" stroke="#444" />
        <path d="M.5 2.500h15" stroke="#444" strokeWidth={2} />
        <path d="M3 6l2 2-2 2M6 10h3" fill="none" stroke="#444" />
      </svg>
      <Tri className="ml-[2px] w-[9px]" dim />
      <span className="ml-[8px] flex-1 text-[12px] italic tracking-[1px] text-[#777]">键入命令</span>
      <Tri up dim className="w-[8px]" />
    </div>
  </div>
);

const Watermark = () => (
  <div className="pointer-events-none absolute left-[1047px] top-[580px] h-[115px] w-[245px] text-[#c4c4c4] [font-family:'Liberation_Sans',sans-serif]">
    <span className="absolute left-0 top-[27px] text-[56px] font-bold leading-none tracking-[-1px]">Bai</span>
    <svg className="absolute left-[82px] top-0" width="76" height="84" viewBox="0 0 76 84">
      <ellipse cx="9" cy="30" rx="9" ry="12" fill="#c4c4c4" transform="rotate(-25 9 30)" />
      <ellipse cx="29" cy="13" rx="9" ry="13" fill="#c4c4c4" />
      <ellipse cx="49" cy="14" rx="9" ry="13" fill="#c4c4c4" />
      <ellipse cx="63" cy="36" rx="9" ry="13" fill="#c4c4c4" transform="rotate(20 63 36)" />
      <path d="M38 35C50 35 51 48 60 55C72 65 65 82 50 81C42 80 34 79 26 81C12 82 6 66 16 56C26 48 26 35 38 35Z" fill="#c4c4c4" />
      <circle cx="38" cy="63" r="17" fill="#212830" />
    </svg>
    <span className="absolute left-[104px] top-[51px] text-[25px] font-bold leading-none tracking-[-1px] text-[#c4c4c4]">du</span>
    <span className="absolute left-[157px] top-[38px] text-[40px] font-bold leading-none [font-family:'Noto_Sans_CJK_SC',sans-serif]">经验</span>
    <span className="absolute left-[1px] top-[85px] text-[30px] leading-none">jingyan.baidu.com</span>
  </div>
);

const StatusBlue = ({ n }: { n: string }) => <Ic n={n} className="h-[21px] w-[23px] bg-[#5b94c8]" size={18} />;

const StatusBar = () => (
  <div className="flex h-[29px] shrink-0 items-center border-t border-[#3b4452] bg-[#222933]">
    <div className="flex h-full w-[816px] shrink-0 items-start pl-[16px] text-[12px] text-[#a9aeb6]">
      <div className="flex h-[18px] w-[46px] items-center justify-center bg-[#262e39] font-bold text-[#eceef0]">模型</div>
      <div className="ml-[5px] flex h-[18px] w-[46px] items-center justify-center bg-[#2b333f]">布局1</div>
      <div className="ml-[8px] flex h-[18px] w-[46px] items-center justify-center bg-[#2b333f]">布局2</div>
      <div className="ml-[11px] flex h-[18px] w-[20px] items-center justify-center text-[15px] font-bold">+</div>
    </div>
    <div className="flex h-[23px] items-center gap-[3px]">
      <div className="flex h-full w-[27px] items-center justify-center bg-[#3a4352] text-[12px] text-[#dfe2e6]">模型</div>
      <div className="flex h-full w-[62px] items-center bg-[#2c3440]">
        <Ic n="grid" className="ml-[2px] w-[24px]" size={19} />
        <Ic n="snap" className="w-[24px]" size={19} />
        <Tri className="w-[12px]" />
      </div>
      <div className="flex h-full w-[161px] items-center bg-[#2c3440]">
        <StatusBlue n="ortho" />
        <Ic n="polar" className="ml-[2px] w-[24px]" size={18} />
        <Tri className="w-[14px]" />
        <Ic n="isoline" className="ml-[2px] w-[22px]" size={18} />
        <Tri className="w-[14px]" />
        <div className="ml-[2px] flex gap-[2px]">
          <StatusBlue n="angle" />
          <StatusBlue n="osnap" />
        </div>
        <Tri className="w-[11px]" />
      </div>
      <div className="ml-[1px] flex h-full w-[104px] items-center bg-[#2c3440]">
        <StatusBlue n="anno1" />
        <Ic n="anno2" className="ml-px w-[24px]" size={18} />
        <Ic n="anno3" className="w-[22px]" size={18} />
        <span className="ml-[4px] text-[11px] text-[#dfe2e6]">1:1</span>
        <Tri className="w-[10px]" />
      </div>
      <div className="flex h-full w-[66px] items-center bg-[#2c3440]">
        <Ic n="gear" className="w-[24px]" size={17} />
        <Tri className="w-[14px]" />
        <Ic n="plus" className="ml-[3px] w-[24px]" size={20} />
      </div>
      <Ic n="iso" className="h-full w-[24px] bg-[#2c3440]" size={18} />
      <Ic n="workspace" className="h-full w-[22px] bg-[#2c3440]" size={19} />
      <div className="flex h-full w-[47px] items-center justify-between bg-[#2c3440] pr-[2px]">
        <Ic n="cleanscreen" className="w-[22px]" size={19} />
        <Ic n="menu" className="w-[22px]" size={20} />
      </div>
    </div>
  </div>
);

export default function App() {
  return (
    <div className="relative flex h-[726px] w-[1362px] flex-col overflow-hidden bg-[#222933] [font-family:'Noto_Sans','Noto_Sans_CJK_SC',sans-serif]">
      <TitleBar />
      <Tabs />
      <Toolbars />
      <div className="flex h-[559px] shrink-0 bg-[#3b4452]">
        <div className="flex w-[62px] shrink-0 items-start gap-[4px] pl-[5px] pt-px">
          <VBar items={drawBar} className="w-[23px]" />
          <VBar items={dimBar} className="w-[24px]" />
        </div>
        <div className="relative w-[1266px] shrink-0 bg-[#212830]">
          <Drawing />
          <span className="absolute left-[2px] top-[4px] text-[12.5px] text-[#d8dade]">[−][俯视][二维线框]</span>
          <ViewCube />
          <CommandLine />
        </div>
        <div className="w-[34px] shrink-0 pl-[3px] pt-px">
          <VBar items={modifyBar} className="w-[23px]" />
        </div>
      </div>
      <StatusBar />
      <div className="h-[4px] shrink-0 bg-[#3b4452]" />
      <Watermark />
      <div className="absolute left-[1345px] top-[655px] flex h-[40px] w-[40px] items-center rounded-full border-2 border-[#e8f2e8] bg-[#3fae4a] pl-[4px] text-[11px] text-white">
        79
      </div>
    </div>
  );
}
